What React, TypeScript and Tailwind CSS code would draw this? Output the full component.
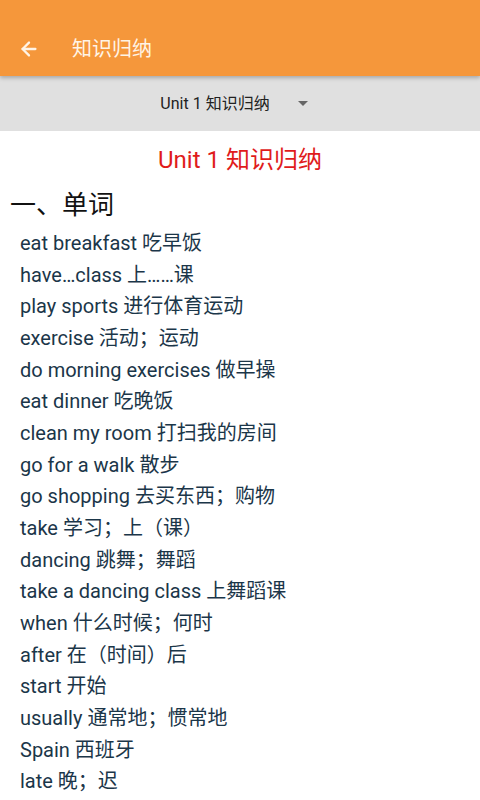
import { ArrowLeft } from "lucide-react";

const words = [
  "eat breakfast 吃早饭",
  "have…class 上……课",
  "play sports 进行体育运动",
  "exercise 活动；运动",
  "do morning exercises 做早操",
  "eat dinner 吃晚饭",
  "clean my room 打扫我的房间",
  "go for a walk 散步",
  "go shopping 去买东西；购物",
  "take 学习；上（课）",
  "dancing 跳舞；舞蹈",
  "take a dancing class 上舞蹈课",
  "when 什么时候；何时",
  "after 在（时间）后",
  "start 开始",
  "usually 通常地；惯常地",
  "Spain 西班牙",
  "late 晚；迟",
];

const font = { fontFamily: 'Roboto, "Noto Sans CJK SC", sans-serif' };

export default function App() {
  return (
    <div className="w-[480px] h-[800px] overflow-hidden bg-white" style={font}>
      <header className="relative z-10 h-[76px] pt-[22px] bg-[#f5973b] shadow-[0_2px_4px_rgba(0,0,0,0.25)]">
        <div className="h-[54px] flex items-center">
          <ArrowLeft className="ml-[18px] w-[22px] h-[22px] text-[#fff4e6]" strokeWidth={2.5} />
          <h1 className="ml-[32px] text-[20px] text-[#fff4e6]">知识归纳</h1>
        </div>
      </header>
      <div className="h-[55px] bg-[#e0e0e0] flex items-center justify-center">
        <span className="ml-[-12px] text-[16px] text-[#222]">Unit 1 知识归纳</span>
        <span className="ml-[28px] w-0 h-0 border-l-[5px] border-r-[5px] border-t-[5px] border-l-transparent border-r-transparent border-t-[#666]" />
      </div>
      <div className="pt-[13px]">
        <h2 className="text-center text-[24px] leading-[32px] text-[#e01b1b]">Unit 1 知识归纳</h2>
        <h3 className="mt-[12px] ml-[10px] text-[26px] leading-[34px] text-[#111]">一、单词</h3>
        <ul className="mt-[6px] ml-[20px]">
          {words.map((w) => (
            <li key={w} className="text-[20px] leading-[31.65px] text-[#1b3649]">
              {w}
            </li>
          ))}
        </ul>
      </div>
    </div>
  );
}
